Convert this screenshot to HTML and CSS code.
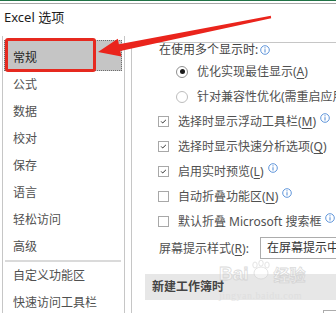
FILE: index.html
```html
<!DOCTYPE html>
<html lang="zh-CN">
<head>
<meta charset="UTF-8">
<title>Excel 选项</title>
<link rel="stylesheet" href="styles.css">
</head>
<body>

<div class="frame-top"></div>
<div class="title">Excel 选项</div>

<div class="main">
  <ul class="nav">
    <li class="nav-item selected">常规</li>
    <li class="nav-item">公式</li>
    <li class="nav-item">数据</li>
    <li class="nav-item">校对</li>
    <li class="nav-item">保存</li>
    <li class="nav-item">语言</li>
    <li class="nav-item">轻松访问</li>
    <li class="nav-item">高级</li>
    <li class="nav-sep"></li>
    <li class="nav-item">自定义功能区</li>
    <li class="nav-item">快速访问工具栏</li>
  </ul>

  <div class="pane">
    <div class="group-title">
      <span>在使用多个显示时:</span>
      <svg class="info" viewBox="0 0 10 10"><circle cx="5" cy="5" r="4.3"/><rect x="4.5" y="4.2" width="1" height="3.3"/><circle class="dot" cx="5" cy="2.8" r="0.65"/></svg>
    </div>

    <div class="option radio-row">
      <span class="radio checked"></span>
      <span>优化实现最佳显示(<u>A</u>)</span>
    </div>
    <div class="option radio-row">
      <span class="radio"></span>
      <span>针对兼容性优化(需重启应用</span>
    </div>

    <div class="option">
      <span class="checkbox"><svg viewBox="0 0 11 11"><polyline points="2.6,5.4 4.5,7.3 8.4,3.6"/></svg></span>
      <span>选择时显示浮动工具栏(<u>M</u>)</span>
      <svg class="info info-up" viewBox="0 0 10 10"><circle cx="5" cy="5" r="4.3"/><rect x="4.5" y="4.2" width="1" height="3.3"/><circle class="dot" cx="5" cy="2.8" r="0.65"/></svg>
    </div>
    <div class="option">
      <span class="checkbox"><svg viewBox="0 0 11 11"><polyline points="2.6,5.4 4.5,7.3 8.4,3.6"/></svg></span>
      <span>选择时显示快速分析选项(<u>Q</u>)</span>
    </div>
    <div class="option">
      <span class="checkbox"><svg viewBox="0 0 11 11"><polyline points="2.6,5.4 4.5,7.3 8.4,3.6"/></svg></span>
      <span>启用实时预览(<u>L</u>)</span>
      <svg class="info info-up" viewBox="0 0 10 10"><circle cx="5" cy="5" r="4.3"/><rect x="4.5" y="4.2" width="1" height="3.3"/><circle class="dot" cx="5" cy="2.8" r="0.65"/></svg>
    </div>
    <div class="option">
      <span class="checkbox"></span>
      <span>自动折叠功能区(<u>N</u>)</span>
      <svg class="info info-up" viewBox="0 0 10 10"><circle cx="5" cy="5" r="4.3"/><rect x="4.5" y="4.2" width="1" height="3.3"/><circle class="dot" cx="5" cy="2.8" r="0.65"/></svg>
    </div>
    <div class="option">
      <span class="checkbox"></span>
      <span>默认折叠 Microsoft 搜索框</span>
      <svg class="info info-up" viewBox="0 0 10 10"><circle cx="5" cy="5" r="4.3"/><rect x="4.5" y="4.2" width="1" height="3.3"/><circle class="dot" cx="5" cy="2.8" r="0.65"/></svg>
    </div>

    <div class="setting">
      <span class="setting-label">屏幕提示样式(<u>R</u>):</span>
      <div class="select">在屏幕提示中</div>
    </div>

    <div class="section">新建工作簿时</div>

    <div class="setting-next"><div class="select-stub"></div></div>
  </div>
</div>

<!-- annotation drawn over the screenshot -->
<div class="callout-box"></div>
<svg class="callout-arrow" viewBox="0 0 336 313">
  <polygon points="98,52 117.8,38.8 118.9,44.2 270.8,15.8 271.2,18.2 120.3,51 121.4,56.4"/>
</svg>

<div class="watermark">
  <div class="wm-logo">
    <span class="wm-bai">Bai</span>
    <svg class="wm-paw" viewBox="0 0 22 20">
      <ellipse cx="5" cy="5" rx="2.2" ry="3"/>
      <ellipse cx="11" cy="3.2" rx="2.2" ry="3"/>
      <ellipse cx="17" cy="5" rx="2.2" ry="3"/>
      <ellipse cx="11" cy="13" rx="7" ry="6"/>
    </svg>
    <span class="wm-cn">经验</span>
  </div>
  <div class="wm-url">jingyan.baidu.com</div>
</div>

</body>
</html>
```

FILE: styles.css
```css
* {
  box-sizing: border-box;
}

body {
  margin: 0;
  width: 336px;
  height: 313px;
  overflow: hidden;
  position: relative;
  background: #fff;
  font-family: "Noto Sans", "Noto Sans CJK SC", sans-serif;
  font-size: 12px;
  color: #505050;
}

.frame-top {
  height: 4px;
  border-top: 1px solid #217346;
  border-bottom: 1px solid #a6a6a6;
}

.title {
  padding: 5px 0 10px 4px;
  height: 32px;
  line-height: 17px;
  font-size: 13px;
  color: #1e1e1e;
}

.main {
  display: flex;
  height: 277px;
}

/* left category list */
.nav {
  list-style: none;
  margin: 0 0 0 2px;
  padding: 4px 2px 0 1px;
  width: 123px;
  flex: none;
  border-left: 1px solid #c6c6c6;
  border-right: 1px solid #c6c6c6;
}

.nav-item {
  height: 27px;
  line-height: 25px;
  padding-left: 8px;
  border: 1px solid transparent;
  white-space: nowrap;
  color: #505050;
}

.nav-item.selected {
  height: 31px;
  padding-top: 4px;
  background: #c5c5c5;
  border: 1px dotted #6e6e6e;
  color: #262626;
}

.nav-sep {
  height: 2px;
  margin: 0 1px;
  background: #dadada;
}

/* right options pane */
.pane {
  flex: 1;
  min-width: 0;
  margin: 6px 0 0 6px;
  padding-left: 13px;
  border-left: 1px solid #c6c6c6;
  border-top: 1px solid #c6c6c6;
  overflow: hidden;
  white-space: nowrap;
}

.group-title {
  display: flex;
  align-items: center;
  height: 13px;
  line-height: 13px;
  margin-bottom: 3px;
  padding-left: 14px;
  color: #444;
}

.group-title .info {
  margin-left: 2px;
}

.option {
  display: flex;
  align-items: center;
  height: 25px;
  line-height: 17px;
  padding-left: 13px;
}

.option u,
.setting u {
  text-decoration-thickness: 1px;
  text-underline-offset: 2px;
}

.radio-row {
  padding-left: 31px;
}

.radio {
  flex: none;
  width: 12px;
  height: 12px;
  margin-right: 9px;
  border: 1px solid #bdbdbd;
  border-radius: 50%;
  background: #fff;
  display: flex;
  align-items: center;
  justify-content: center;
}

.radio.checked {
  border-color: #8f8f8f;
}

.radio.checked::after {
  content: "";
  width: 5px;
  height: 5px;
  border-radius: 50%;
  background: #1a1a1a;
}

.checkbox {
  flex: none;
  width: 11px;
  height: 11px;
  margin-right: 9px;
  border: 1px solid #a8a8a8;
  background: #fff;
  display: flex;
}

.checkbox svg {
  width: 9px;
  height: 9px;
}

.checkbox polyline {
  fill: none;
  stroke: #2b2b2b;
  stroke-width: 1.2;
}

.info {
  flex: none;
  width: 10px;
  height: 10px;
}

.info circle {
  fill: none;
  stroke: #4f8ad6;
  stroke-width: 0.9;
}

.info rect,
.info .dot {
  fill: #4f8ad6;
  stroke: none;
}

.info-up {
  align-self: flex-start;
  margin: 4px 0 0 4px;
}

.setting {
  display: flex;
  align-items: center;
  height: 22px;
  margin-top: 3px;
  padding-left: 14px;
}

.setting-label {
  width: 101px;
  flex: none;
}

.select {
  flex: 1;
  height: 22px;
  line-height: 20px;
  padding-left: 6px;
  border: 1px solid #acacac;
  border-right: none;
  color: #333;
}

.section {
  height: 26px;
  line-height: 26px;
  margin-top: 15px;
  padding-left: 7px;
  background: #e7e7e7;
  font-weight: 600;
  color: #444;
}

.setting-next {
  margin-top: 10px;
  padding-left: 178px;
}

.select-stub {
  height: 20px;
  border-top: 1px solid #acacac;
  border-left: 1px solid #acacac;
}

/* red annotation */
.callout-box {
  position: absolute;
  left: 5px;
  top: 38px;
  width: 91px;
  height: 34px;
  border: 3px solid #e6291f;
  border-radius: 3px;
}

.callout-arrow {
  position: absolute;
  left: 0;
  top: 0;
  width: 336px;
  height: 313px;
}

.callout-arrow polygon {
  fill: #ea241c;
}

/* faint site watermark */
.watermark {
  position: absolute;
  left: 219px;
  top: 259px;
  opacity: 0.75;
}

.wm-logo {
  display: flex;
  align-items: center;
  height: 30px;
}

.wm-bai,
.wm-cn {
  font-family: "Liberation Sans", "Noto Sans CJK SC", sans-serif;
  font-weight: bold;
  font-size: 19px;
  color: rgba(255, 255, 255, 0.7);
  -webkit-text-stroke: 0.8px #cfcfcf;
}

.wm-cn {
  font-size: 16px;
  margin-left: 2px;
}

.wm-paw {
  width: 22px;
  height: 20px;
  margin: -8px 0 0 1px;
}

.wm-paw ellipse {
  fill: rgba(255, 255, 255, 0.6);
  stroke: #d2d2d2;
  stroke-width: 0.8;
}

.wm-url {
  font-family: "Liberation Serif", serif;
  font-size: 10px;
  letter-spacing: 0.5px;
  color: #dcdcdc;
  margin-top: 1px;
}
```
